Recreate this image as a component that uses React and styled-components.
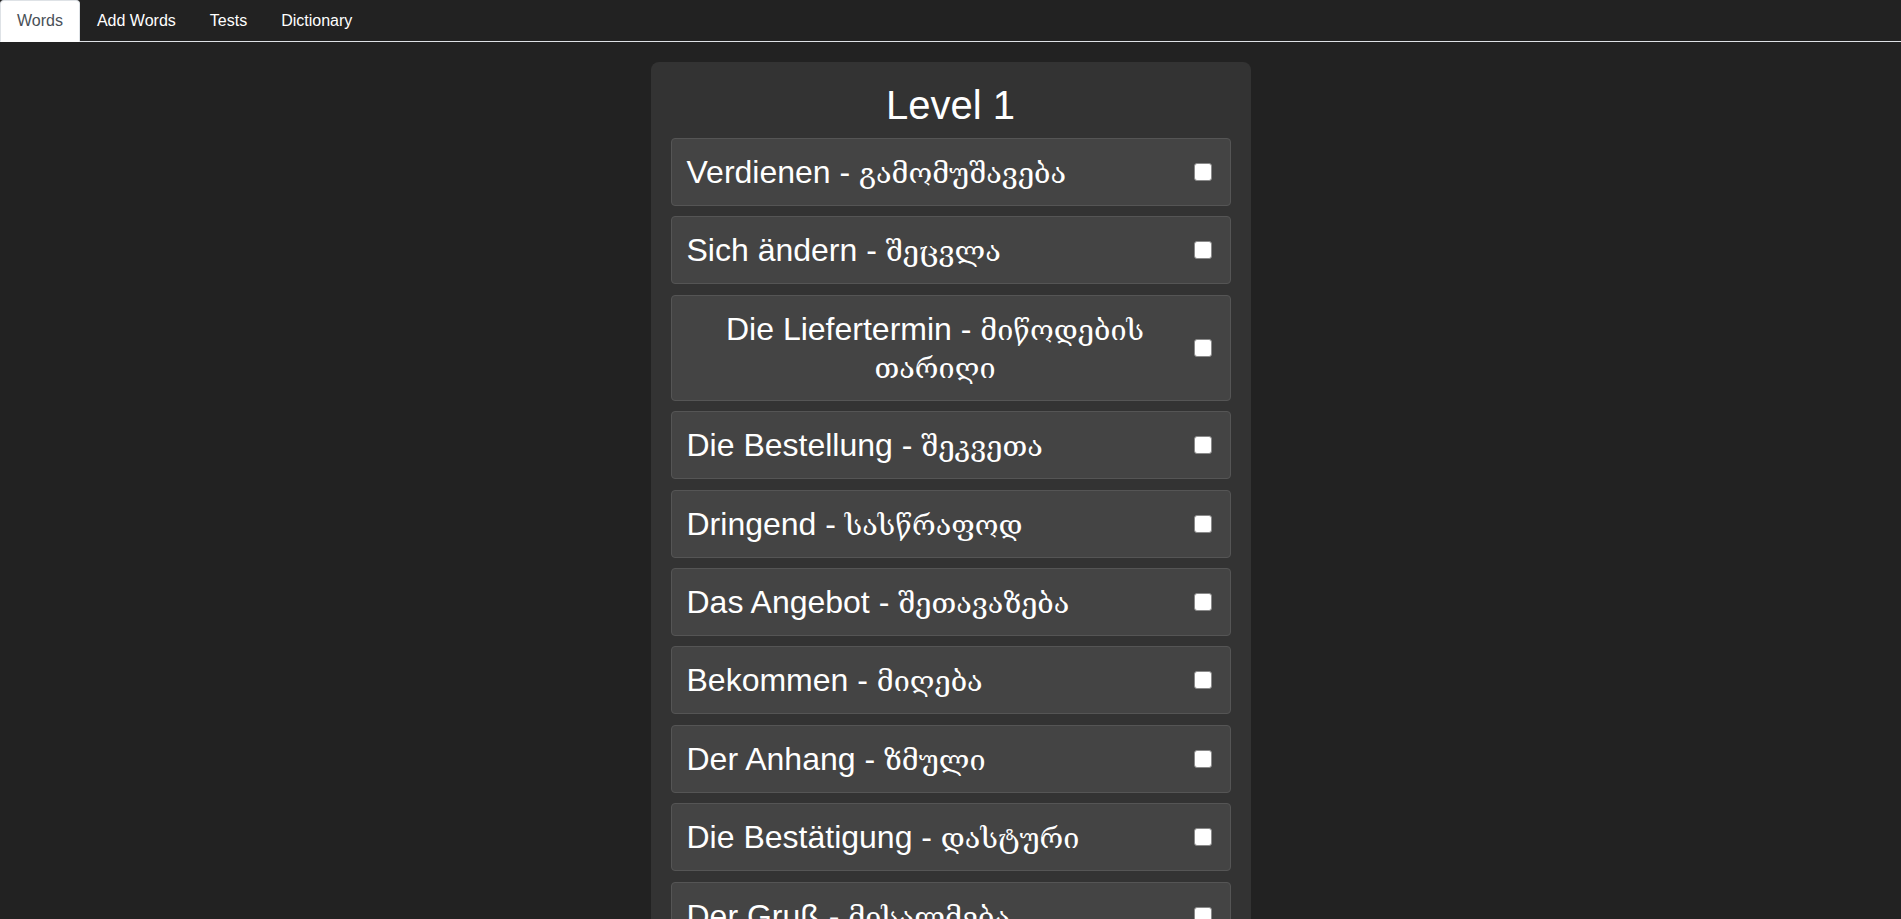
import React, { useState } from "react";
import styled, { createGlobalStyle } from "styled-components";

const GlobalStyle = createGlobalStyle`
  html, body {
    margin: 0;
    padding: 0;
    background: #222222;
    color: #ffffff;
    font-family: "Liberation Sans", Arial, "DejaVu Serif", "DejaVu Sans", sans-serif;
  }
  body::-webkit-scrollbar {
    display: none;
  }
`

const Tabs = styled.ul`
  display: flex;
  list-style: none;
  margin: 0;
  padding: 0;
  border-bottom: 1px solid #dee2e6;
`

const Tab = styled.li`
  margin-bottom: -1px;
  padding: 8px 16px;
  font-size: 16px;
  line-height: 24px;
  border: 1px solid transparent;
  border-top-left-radius: 4px;
  border-top-right-radius: 4px;
  cursor: pointer;
  color: ${props => (props.active ? "#495057" : "#ffffff")};
  background: ${props => (props.active ? "#ffffff" : "transparent")};
  border-color: ${props => (props.active ? "#dee2e6 #dee2e6 #ffffff" : "transparent")};
`

const Panel = styled.div`
  width: 600px;
  box-sizing: border-box;
  margin: 20px auto 0;
  padding: 20px 20px 10px;
  background: #333333;
  border-radius: 8px;
`

const Title = styled.h1`
  margin: 0 0 10px;
  font-size: 40px;
  line-height: 46px;
  font-weight: normal;
  text-align: center;
`

const WordRow = styled.div`
  display: flex;
  align-items: center;
  justify-content: space-between;
  margin-bottom: 10.4px;
  padding: 14px 15px;
  background: #444444;
  border: 1px solid #555555;
  border-radius: 4px;
`

const WordText = styled.span`
  font-size: 32px;
  line-height: 38px;
  text-align: center;
`

const Translation = styled.span`
  font-size: 0.9em;
  line-height: 1;
`

const Check = styled.input`
  flex-shrink: 0;
  appearance: none;
  width: 18px;
  height: 18px;
  margin: 0 3px 0 10px;
  background: #ffffff;
  border: 1px solid #8a8a8a;
  border-radius: 3px;
  cursor: pointer;

  &:checked {
    background: #0075ff;
    border-color: #0075ff;
  }
`

const words = [
  { de: "Verdienen", ka: "გამომუშავება" },
  { de: "Sich ändern", ka: "შეცვლა" },
  { de: "Die Liefertermin", ka: "მიწოდების თარიღი" },
  { de: "Die Bestellung", ka: "შეკვეთა" },
  { de: "Dringend", ka: "სასწრაფოდ" },
  { de: "Das Angebot", ka: "შეთავაზება" },
  { de: "Bekommen", ka: "მიღება" },
  { de: "Der Anhang", ka: "ზმული" },
  { de: "Die Bestätigung", ka: "დასტური" },
  { de: "Der Gruß", ka: "მისალმება" },
]

const tabs = ["Words", "Add Words", "Tests", "Dictionary"]

const App = () => {
  const [active, setActive] = useState("Words")
  const [learned, setLearned] = useState({})

  return (
    <>
      <GlobalStyle />
      <Tabs>
        {tabs.map(t => (
          <Tab key={t} active={t === active ? 1 : 0} onClick={() => setActive(t)}>
            {t}
          </Tab>
        ))}
      </Tabs>
      <Panel>
        <Title>Level 1</Title>
        {words.map(w => (
          <WordRow key={w.de}>
            <WordText>
              {w.de} - <Translation>{w.ka}</Translation>
            </WordText>
            <Check
              type="checkbox"
              checked={!!learned[w.de]}
              onChange={() => setLearned({ ...learned, [w.de]: !learned[w.de] })}
            />
          </WordRow>
        ))}
      </Panel>
    </>
  )
}

export default App;
